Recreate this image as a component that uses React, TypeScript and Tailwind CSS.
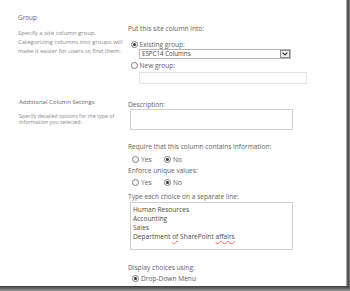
import React from "react";

function Radio({ checked }: { checked?: boolean }) {
  return (
    <span className="flex h-[7px] w-[7px] shrink-0 items-center justify-center rounded-full border border-[#7a7a7a] bg-white">
      {checked ? <span className="h-[3px] w-[3px] rounded-full bg-[#333]" /> : null}
    </span>
  );
}

export default function App() {
  const font = { fontFamily: '"Open Sans", "Noto Sans", sans-serif' };
  return (
    <div className="flex h-[291px] w-[350px] flex-col bg-white" style={font}>
      <div className="flex h-[286px]">
        <div className="flex w-[346px] flex-col bg-white text-[#5e5e5e]">
          {/* Row 1: Group */}
          <div className="flex h-[90px]">
            <div className="w-[110px] pl-[18px]">
              <div className="mt-[13px] text-[6.4px] leading-[9px] text-[#666]">Group</div>
              <div className="mt-[7px] text-[6px] leading-[9px] text-[#888]">
                <div className="whitespace-nowrap">Specify a site column group.</div>
                <div className="whitespace-nowrap">Categorizing columns into groups will</div>
                <div className="whitespace-nowrap">make it easier for users to find them.</div>
              </div>
            </div>
            <div className="flex flex-col pl-[18px]">
              <div className="mt-[23.5px] whitespace-nowrap text-[6.6px] leading-[9px]">Put this site column into:</div>
              <div className="mt-[7px] flex h-[9px] items-center gap-[1.5px] pl-[3px]">
                <Radio checked />
                <span className="whitespace-nowrap text-[6.6px] leading-[9px]">Existing group:</span>
              </div>
              <div className="ml-[11px] flex h-[10px] w-[152px] items-center border border-[#b5b5b5] bg-white">
                <span className="flex-1 pl-[2px] text-[6.2px] leading-[8px] text-[#444]">ESPC14 Columns</span>
                <span className="flex h-[8px] w-[10px] items-center justify-center border border-[#8a8a8a] bg-[#f0f0f0]">
                  <svg width="6" height="4" viewBox="0 0 6 4">
                    <path d="M0.6 0.6 L3 3 L5.4 0.6" fill="none" stroke="#333" strokeWidth="1.2" />
                  </svg>
                </span>
              </div>
              <div className="mt-[2.5px] flex h-[9px] items-center gap-[1.5px] pl-[3px]">
                <Radio />
                <span className="whitespace-nowrap text-[6.6px] leading-[9px]">New group:</span>
              </div>
              <div className="ml-[11px] mt-[1.5px] h-[12px] w-[168px] border border-[#e3e3e3] bg-white" />
            </div>
          </div>
          {/* Row 2: Additional Column Settings */}
          <div className="flex flex-1">
            <div className="w-[110px] pl-[19px]">
              <div className="mt-[7.5px] whitespace-nowrap text-[6px] leading-[9px] text-[#666]">Additional Column Settings</div>
              <div className="mt-[6px] text-[5.3px] leading-[6.5px] text-[#888]">
                <div className="whitespace-nowrap">Specify detailed options for the type of</div>
                <div className="whitespace-nowrap">information you selected.</div>
              </div>
            </div>
            <div className="flex flex-col pl-[18px]">
              <div className="mt-[9.5px] whitespace-nowrap text-[6.6px] leading-[9px]">Description:</div>
              <div className="ml-[2px] mt-[0.5px] h-[21px] w-[163px] border border-[#cfcfcf] bg-white" />
              <div className="mt-[11.5px] whitespace-nowrap text-[6.6px] leading-[9px]">Require that this column contains information:</div>
              <div className="mt-[4px] flex h-[9px] items-center pl-[4px] text-[6.6px] leading-[9px]">
                <Radio />
                <span className="ml-[2px] w-[23px]">Yes</span>
                <Radio checked />
                <span className="ml-[2px]">No</span>
              </div>
              <div className="mt-[2px] whitespace-nowrap text-[6.6px] leading-[9px]">Enforce unique values:</div>
              <div className="mt-[3px] flex h-[9px] items-center pl-[4px] text-[6.6px] leading-[9px]">
                <Radio />
                <span className="ml-[2px] w-[23px]">Yes</span>
                <Radio checked />
                <span className="ml-[2px]">No</span>
              </div>
              <div className="mt-[5px] whitespace-nowrap text-[6.6px] leading-[9px]">Type each choice on a separate line:</div>
              <div className="ml-[2px] mt-[1.5px] h-[48px] w-[163px] border border-[#cfcfcf] bg-white pl-[2px] pt-[1.5px] text-[6.6px] leading-[9px] text-[#4a4a4a]">
                <div>Human Resources</div>
                <div>Accounting</div>
                <div>Sales</div>
                <div className="whitespace-nowrap">
                  Department <span className="underline decoration-[#e86060] decoration-wavy decoration-[0.5px] underline-offset-[1px]">of</span> SharePoint{" "}
                  <span className="underline decoration-[#e86060] decoration-wavy decoration-[0.5px] underline-offset-[1px]">affairs</span>
                </div>
              </div>
              <div className="mt-[12.5px] whitespace-nowrap text-[6.6px] leading-[9px]">Display choices using:</div>
              <div className="mt-[2px] flex h-[9px] items-center gap-[2px] pl-[4px] text-[6.6px] leading-[9px]">
                <Radio checked />
                <span className="whitespace-nowrap">Drop-Down Menu</span>
              </div>
            </div>
          </div>
        </div>
        <div className="w-[4px] bg-gradient-to-r from-[#c8c8c8] via-[#3c3c3c] to-[#8c8c8c]" />
      </div>
      <div className="h-[5px] w-[350px] bg-gradient-to-b from-[#3c3c3c] to-[#9a9a9a]" />
    </div>
  );
}
